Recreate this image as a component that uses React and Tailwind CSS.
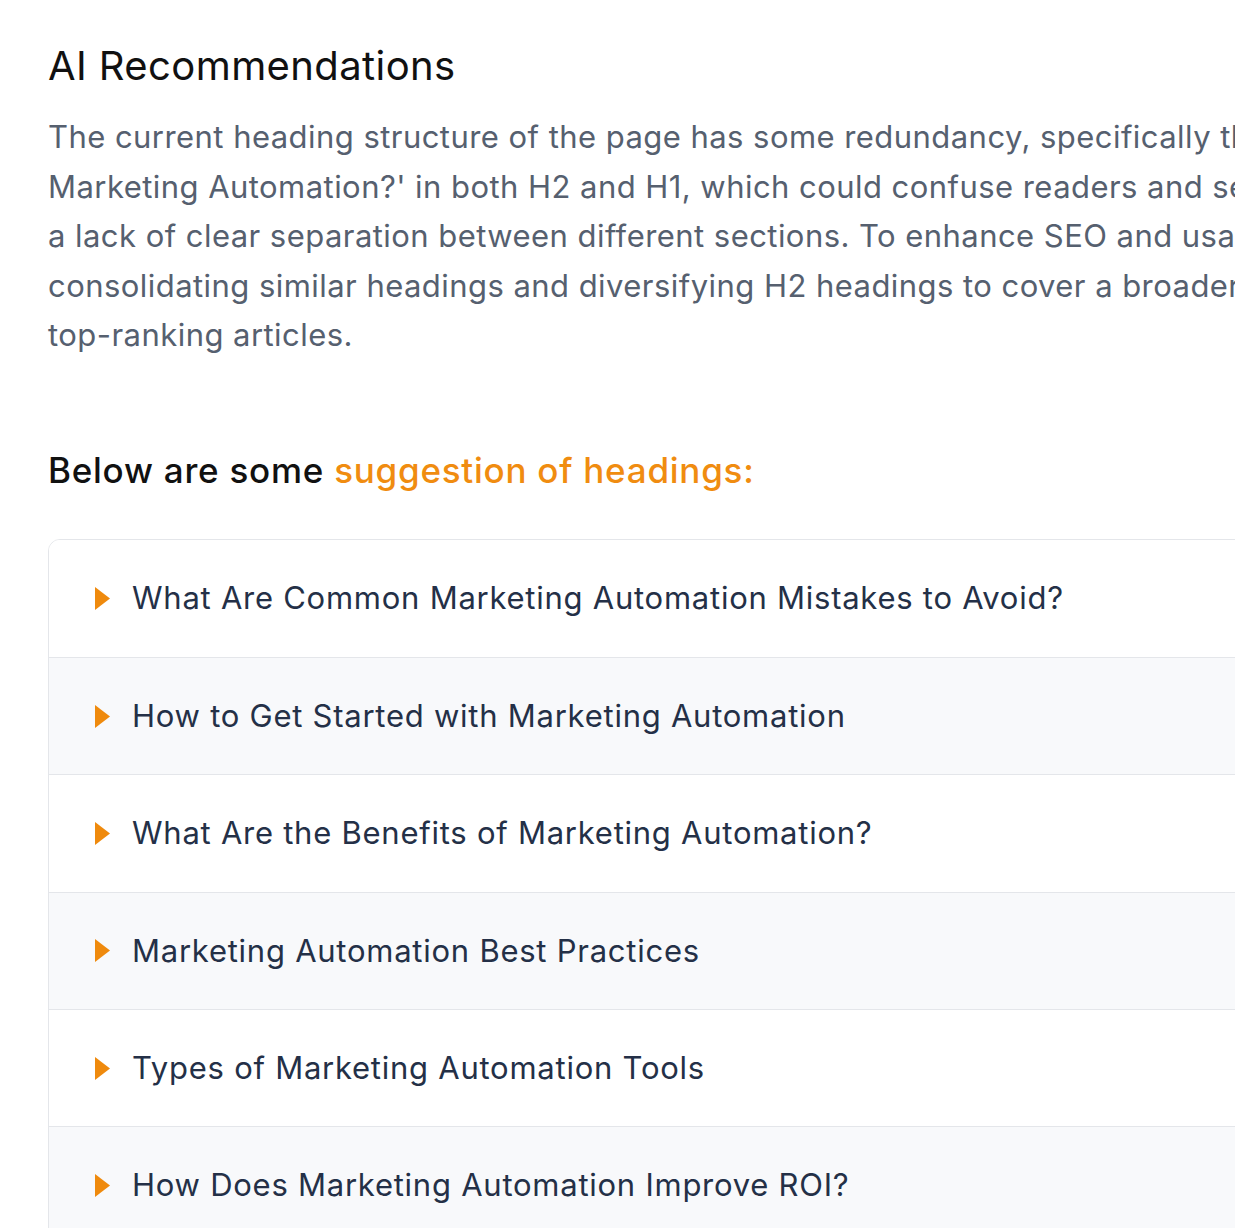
import React from 'react';

const LINES = [
  "The current heading structure of the page has some redundancy, specifically the repeated 'What is",
  "Marketing Automation?' in both H2 and H1, which could confuse readers and search engines. There is also",
  'a lack of clear separation between different sections. To enhance SEO and usability, consider',
  'consolidating similar headings and diversifying H2 headings to cover a broader range of topics found in',
  'top-ranking articles.',
];

const HEADINGS = [
  'What Are Common Marketing Automation Mistakes to Avoid?',
  'How to Get Started with Marketing Automation',
  'What Are the Benefits of Marketing Automation?',
  'Marketing Automation Best Practices',
  'Types of Marketing Automation Tools',
  'How Does Marketing Automation Improve ROI?',
];

const Caret = () => (
  <svg width="16" height="23" viewBox="0 0 16 23" className="shrink-0">
    <polygon points="0,0 15,11.5 0,23" fill="#ef8a0d" />
  </svg>
);

const App = () => {
  return (
    <div className="w-[1235px] h-[1228px] overflow-hidden bg-white font-['Inter',sans-serif]">
      <div className="w-[1500px] pl-12 pt-[42px]">
        {/* Title */}
        <h1 className="text-[40px] leading-[48px] font-normal text-[#111] tracking-[0.4px]">AI Recommendations</h1>

        {/* Summary */}
        <div className="mt-[22px] text-[31px] leading-[49.5px] text-[#56606f] tracking-[0.45px]">
          {LINES.map((l, i) => (
            <div key={i} className="whitespace-nowrap">{l}</div>
          ))}
        </div>

        {/* Subheading */}
        <h2 className="mt-[88px] text-[35px] leading-[44px] font-medium text-[#111] tracking-[0.75px]">
          Below are some <span className="text-[#f08c10]">suggestion of headings:</span>
        </h2>

        {/* Headings list */}
        <div className="mt-[47px] border border-[#e4e6ea] rounded-tl-xl overflow-hidden">
          {HEADINGS.map((h, i) => (
            <div
              key={h}
              className={`h-[117.4px] flex items-center gap-[21px] pl-[46px] ${i > 0 ? 'border-t border-[#e4e6ea]' : ''} ${i % 2 ? 'bg-[#f8f9fb]' : 'bg-white'}`}
            >
              <Caret />
              <span className="text-[31px] text-[#243047] tracking-[0.75px] whitespace-nowrap">{h}</span>
            </div>
          ))}
        </div>
      </div>
    </div>
  );
};

export default App;
